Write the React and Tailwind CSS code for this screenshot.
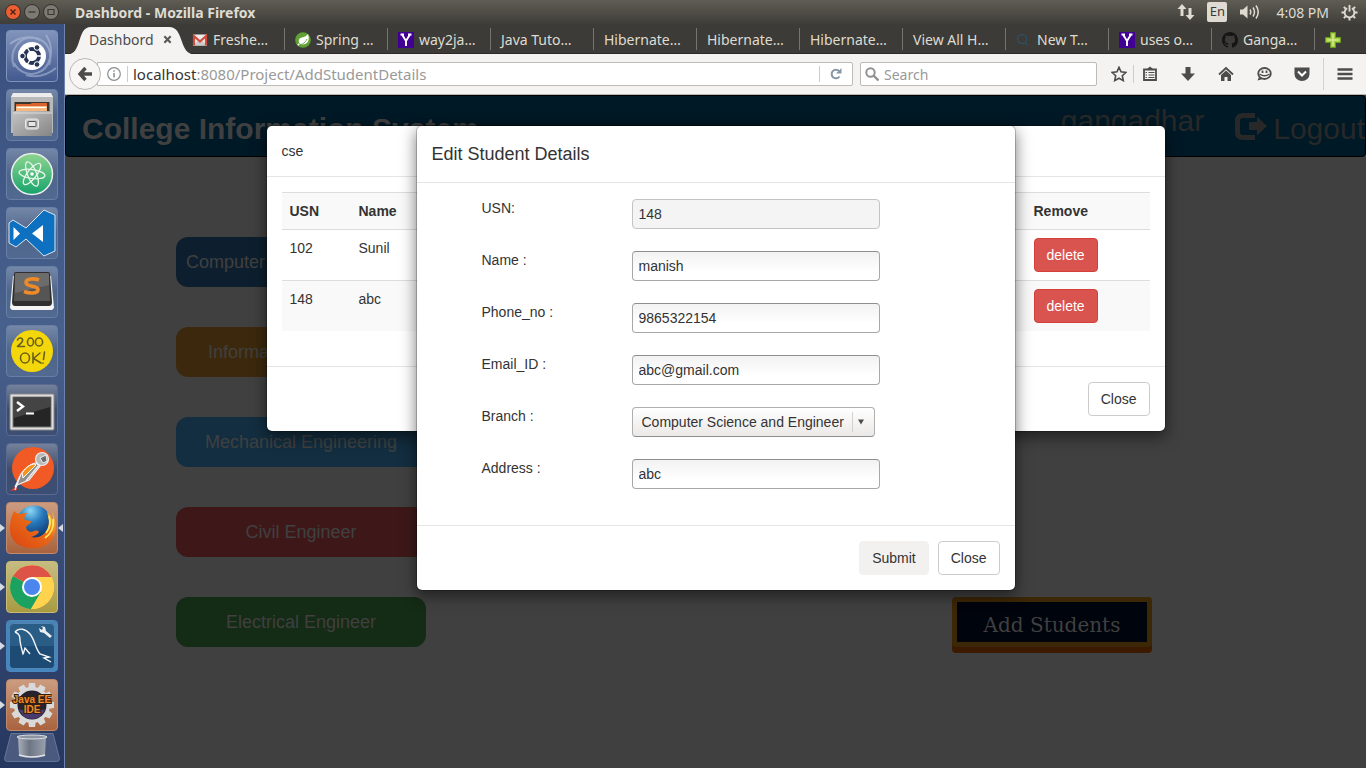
import React from "react";

const tileBase =
  "relative flex h-[52px] w-[52px] shrink-0 items-center justify-center rounded-[4px] border ";

function Art({ children }) {
  return (
    <svg viewBox="0 0 52 52" className="absolute -inset-px h-[52px] w-[52px]" aria-hidden="true">
      {children}
    </svg>
  );
}

const blue = "border-[#7f92ba] bg-linear-to-b/srgb from-[#8294bb] to-[#435a90]";
const slate = "border-[#677fa5] bg-linear-to-b/srgb from-[#7487a8] via-[#4f6589] to-[#526a91]";
const night = "border-[#5a6b8f] bg-linear-to-b/srgb from-[#74819b] via-[#3e4d6d] to-[#3c4e74]";
const rust = "border-[#c08a6c] bg-linear-to-b/srgb from-[#cc9c80] to-[#a9633e]";

const gearTeeth = Array.from({ length: 12 }, (_, i) => i * 30);

const launcherItems = [
  {
    name: "Ubuntu",
    tone: blue,
    art: (
      <Art>
        <g fill="none" stroke="#b5c1dc" strokeWidth="2" opacity=".55">
          <path d="M8 37C2 20 14 5 30 8c12 3 17 15 13 27" />
          <path d="M40 5c10 15 4 34-9 38-10 3-19-2-23-10" />
          <path d="M4 14c10-8 22-8 30-4M50 38c-10 8-20 10-30 7" />
        </g>
        <circle cx="26" cy="26" r="14" fill="#fff" />
        <circle cx="26" cy="26" r="7" fill="none" stroke="#263456" strokeWidth="4" />
        <g stroke="#fff" strokeWidth="1.4">
          <path d="M26 26H37M26 26l-5.500-10M26 26l-5.500 10" />
        </g>
        <circle cx="26" cy="26" r="5" fill="#fff" />
        <g fill="#263456" stroke="#fff" strokeWidth="1">
          <circle cx="16.500" cy="26" r="2.800" />
          <circle cx="31" cy="17.500" r="2.800" />
          <circle cx="31" cy="34.500" r="2.800" />
        </g>
      </Art>
    ),
  },
  {
    name: "Files",
    tone: slate,
    art: (
      <Art>
        <defs>
          <linearGradient id="drawer" x1="0" y1="0" x2="1" y2="1">
            <stop offset="0" stopColor="#c4c4c4" />
            <stop offset="1" stopColor="#858585" />
          </linearGradient>
        </defs>
        <path d="M7 4h38l2 4v36H5V8z" fill="#b9b9b9" />
        <path d="M7 4h38l2 4H5z" fill="#ececec" />
        <rect x="8.500" y="13" width="35" height="12" fill="#38352f" />
        <path d="M10 15h14l2-1h15v8H10z" fill="#d9642e" />
        <path d="M10 17h31v5H10z" fill="#f5b77b" />
        <path d="M11 18.500h29" stroke="#fff" strokeWidth="1.200" />
        <path d="M9 22h34l3 2v23H7V24z" fill="url(#drawer)" />
        <path d="M7 24h39" stroke="#ddd" strokeWidth="1" />
        <rect x="19.500" y="30" width="13" height="10" rx="2" fill="#c9c9c9" stroke="#e9e9e9" />
        <rect x="22" y="32.500" width="8" height="5" rx=".5" fill="#e6e6e6" stroke="#555" />
      </Art>
    ),
  },
  {
    name: "Atom",
    tone: slate,
    art: (
      <Art>
        <defs>
          <linearGradient id="atomFill" x1="0" y1="0" x2="0" y2="1">
            <stop offset="0" stopColor="#8ed58f" />
            <stop offset="1" stopColor="#17a36c" />
          </linearGradient>
        </defs>
        <circle cx="26" cy="26" r="20.500" fill="url(#atomFill)" stroke="#eee" strokeWidth="1.500" />
        <g fill="none" stroke="#e6f6ea" strokeWidth="1.300">
          <ellipse cx="26" cy="26" rx="13" ry="4.500" transform="rotate(8 26 26)" />
          <ellipse cx="26" cy="26" rx="13" ry="4.500" transform="rotate(68 26 26)" />
          <ellipse cx="26" cy="26" rx="13" ry="4.500" transform="rotate(-52 26 26)" />
        </g>
        <circle cx="26" cy="26" r="1.800" fill="#fff" />
      </Art>
    ),
  },
  {
    name: "Visual Studio Code",
    tone: slate,
    art: (
      <Art>
        <path
          d="M38 3l11 5v36l-11 5-18-17-10 8-7-4V16l4-3 13 8z"
          fill="#0e70c0"
          stroke="#dbe6f2"
          strokeWidth="1"
        />
        <path d="M7.500 20v13l6.500-6.500zM37 18v17l-11-8.500z" fill="#fff" />
      </Art>
    ),
  },
  {
    name: "Sublime Text",
    tone: slate,
    art: (
      <Art>
        <path d="M7 10h38l3 32-2 2H6l-2-2z" fill="#f4f4f4" />
        <path d="M8 8q0-2 2-2h32q2 0 2 2l2 28q0 4-3 4H9q-3 0-3-4z" fill="#2f2f2f" />
        <path d="M9 8q0-1 2-1h30q2 0 2 1l1 27H8z" fill="#555" />
        <path d="M9 8q0-1 2-1h30q2 0 2 1v11L9 27z" fill="#6c6c6c" />
        <path
          d="M33 14c-5-2-13-1.500-13 2.500 0 5 12 2.500 12 7 0 4.500-9 4-14 2"
          fill="none"
          stroke="#ee8a28"
          strokeWidth="3.600"
        />
      </Art>
    ),
  },
  {
    name: "Rest client",
    tone: slate,
    art: (
      <Art>
        <circle cx="26" cy="26" r="21" fill="#f4d70b" />
        <g fill="none" stroke="#6a5f17" strokeWidth="1.600" strokeLinecap="round" strokeLinejoin="round">
          <path d="M11.500 15c1-3 6-2.500 5 1-.6 2-3.500 4-5 5.500h7" />
          <ellipse cx="24.500" cy="17" rx="3" ry="4" />
          <ellipse cx="33" cy="17" rx="3.600" ry="4" />
          <ellipse cx="19" cy="33" rx="4.500" ry="5" />
          <path d="M27 28v10M34 28l-6.500 5.500 7.500 4.500M38.500 27l-1 7.500M37 38v.2" />
        </g>
      </Art>
    ),
  },
  {
    name: "Terminal",
    tone: night,
    art: (
      <Art>
        <rect x="4" y="10" width="44" height="36" rx="1" fill="#dedede" stroke="#888" />
        <rect x="7" y="13" width="38" height="30" fill="#252525" stroke="#777" />
        <path d="M8 14h36v9L8 34z" fill="#444" />
        <path d="M11 18l6 4.500-6 4.500" fill="none" stroke="#fff" strokeWidth="2.400" />
        <path d="M20 29.500h8" stroke="#fff" strokeWidth="2" />
      </Art>
    ),
  },
  {
    name: "Postman",
    tone: night,
    art: (
      <Art>
        <circle cx="27" cy="25" r="21" fill="#f15a24" />
        <path d="M4 48l6-5 1 4z" fill="#e8391d" />
        <path d="M9 44l6-13c4-6 11-11 15-11l4 3-11 14-12 5z" fill="#8f8f8f" stroke="#f1f1f1" strokeWidth="1.200" />
        <path d="M16 30c4-6 9-9 13-9l1 1-13 13z" fill="#f7931e" stroke="#fff" />
        <path d="M33 22L20 38M14 33l-5 14" stroke="#eee" strokeWidth="1.400" />
        <circle cx="36" cy="16" r="6.500" fill="#b8b8b8" stroke="#eee" strokeWidth="1.200" />
        <path d="M34 15l6-3 1 6-4 2z" fill="#6b6b6b" stroke="#fff" strokeWidth=".8" />
      </Art>
    ),
  },
  {
    name: "Firefox",
    tone: rust,
    running: true,
    focused: true,
    art: (
      <Art>
        <defs>
          <radialGradient id="globe" cx=".4" cy=".15" r=".8">
            <stop offset="0" stopColor="#8bd8f5" />
            <stop offset=".45" stopColor="#2678bd" />
            <stop offset="1" stopColor="#10356e" />
          </radialGradient>
          <linearGradient id="fox" x1="0" y1="1" x2="1" y2="0">
            <stop offset="0" stopColor="#d94412" />
            <stop offset=".6" stopColor="#ea6a17" />
            <stop offset="1" stopColor="#ffd23e" />
          </linearGradient>
        </defs>
        <circle cx="28" cy="21" r="17.500" fill="url(#globe)" />
        <path
          d="M8 9c2 2 4 3 6 3 3-1 5-1 8-1-4 3-4 5-3 7l6 1c1 2-4 4-5 6 0 4 5 6 8 4 3-1 4 0 5 1-2 3-5 4-8 5 8 2 15-3 17-10 2-6 0-11-1-15 4 3 6 8 6 12 1-5 0-9-2-13 5 7 6 17 3 24-4 10-13 14-22 13C12 46 4 38 4 28c0-8 1-13 4-19z"
          fill="url(#fox)"
        />
        <path d="M43 14c2 6 1 12-3 17M47 17c1 7-1 14-8 19" fill="none" stroke="#ffe75d" strokeWidth="1.800" />
      </Art>
    ),
  },
  {
    name: "Chrome",
    tone: "border-[#c9bd75] bg-linear-to-b/srgb from-[#c6bc82] to-[#a99b42]",
    running: true,
    art: (
      <Art>
        <circle cx="26" cy="26" r="22" fill="#ffd34d" />
        <path d="M26 26L7 15A22 22 0 0 1 45.500 16z" fill="#dd5347" />
        <path d="M7 15A22 22 0 0 0 25 48l10-17-9-5z" fill="#1ba260" />
        <path d="M26 16h19.500A22 22 0 0 1 25 48l10-17z" fill="#ffd34d" />
        <circle cx="26" cy="26" r="10" fill="#fff" />
        <circle cx="26" cy="26" r="8" fill="#4a86ee" />
      </Art>
    ),
  },
  {
    name: "MySQL Workbench",
    tone: "border-[#4a87bd] bg-linear-to-b/srgb from-[#4b83b3] to-[#4585c0]",
    running: true,
    art: (
      <Art>
        <rect x="3.500" y="3.500" width="45" height="45" rx="4" fill="#2a5d86" stroke="#4f86b4" />
        <path d="M4 26h44v18q0 4-4 4H8q-4 0-4-4z" fill="#1d4b73" />
        <path
          d="M9 12c4-5 11-3 15 2 5 6 5 14 10 20l9 3-5 1 7 4M9 12c5 2 5 5 5 9 1 6 2 9 3 13 1-1 1-4 2-6l5 6"
          fill="none"
          stroke="#f2f6fa"
          strokeWidth="1.400"
        />
        <path d="M35 6l4 1 1 4 6 5-2 2-6-5-4-1-1-4 3 2 1-2z" fill="#e9eef3" />
      </Art>
    ),
  },
  {
    name: "Java EE IDE",
    tone: rust,
    running: true,
    art: (
      <Art>
        <g fill="#d9d9d9">
          {gearTeeth.map((a) => (
            <path key={a} d="M23 4h6l1 7h-8z" transform={`rotate(${a} 26 26)`} />
          ))}
        </g>
        <circle cx="26" cy="26" r="18" fill="#d9d9d9" />
        <circle cx="26" cy="26" r="14.500" fill="#28222f" />
        <path d="M13 30c8 3 18 3 26 0-2 6-7 10-13 10s-11-4-13-10z" fill="#493a70" />
        <g
          fill="#f08a2c"
          stroke="#33200c"
          strokeWidth="2"
          paintOrder="stroke"
          fontFamily="Liberation Sans, sans-serif"
          fontWeight="bold"
          fontSize="10"
          textAnchor="middle"
        >
          <text x="26" y="24">Java EE</text>
          <text x="26" y="34">IDE</text>
        </g>
      </Art>
    ),
  },
];

function Launcher() {
  return (
    <nav
      aria-label="Launcher"
      className="flex w-[65px] shrink-0 flex-col items-center gap-[7px] border-r border-[#6b83ad] bg-linear-to-b/srgb from-[#3a5180] via-[#48608c] via-42% to-[#26375f] pt-[6px] pr-px"
    >
      {launcherItems.map((item) => (
        <div key={item.name} className="relative flex w-full justify-center">
          {item.running && (
            <svg viewBox="0 0 5 8" className="absolute top-[22px] left-0 h-2 w-[5px]" aria-hidden="true">
              <path d="M0 0l5 4-5 4z" fill="#d5dae3" />
            </svg>
          )}
          <button type="button" aria-label={item.name} className={tileBase + item.tone}>
            {item.art}
          </button>
          {item.focused && (
            <svg viewBox="0 0 5 8" className="absolute top-[22px] right-0 h-2 w-[5px]" aria-hidden="true">
              <path d="M5 0L0 4l5 4z" fill="#d5dae3" />
            </svg>
          )}
        </div>
      ))}
      <button type="button" aria-label="Trash" className="-mt-[5px]">
        <svg viewBox="0 0 56 29" className="h-[29px] w-[56px]" aria-hidden="true">
          <defs>
            <linearGradient id="bin" x1="0" y1="0" x2="1" y2="0">
              <stop offset="0" stopColor="#a9b0ba" />
              <stop offset=".4" stopColor="#6d7585" />
              <stop offset="1" stopColor="#99a1ad" />
            </linearGradient>
          </defs>
          <path d="M7 .5h42l6.500 25q0 3-3 3h-49q-3 0-3-3z" fill="#4a5a7e" stroke="#64759a" />
          <path d="M14 3h28l-1 20q-13 4-26 0z" fill="url(#bin)" />
          <path d="M15 22q13 4 26 0" stroke="#dfe3e8" strokeWidth="1.500" fill="none" />
          <ellipse cx="28" cy="4" rx="15" ry="2" fill="#8d95a2" stroke="#dde1e6" />
        </svg>
      </button>
    </nav>
  );
}

function SystemBar() {
  return (
    <header className="flex h-6 shrink-0 items-center bg-linear-to-b/srgb from-[#5f5d53] to-[#3e3d39] pl-[5px] font-['Noto_Sans',sans-serif] text-[14px] text-[#dfdbd2]">
      <div className="flex gap-[3px]">
        <button type="button" aria-label="Close window" className="h-4 w-4">
          <svg viewBox="0 0 16 16"><circle cx="8" cy="8" r="7.500" fill="#ed5f33" stroke="#34312c" /><path d="M5.500 5.500l5 5m0-5l-5 5" stroke="#4a2313" strokeWidth="1.400" /></svg>
        </button>
        <button type="button" aria-label="Minimise" className="h-4 w-4">
          <svg viewBox="0 0 16 16"><circle cx="8" cy="8" r="7.500" fill="#7c7a72" stroke="#34312c" /><path d="M4.500 8h7" stroke="#3b3934" strokeWidth="1.300" /></svg>
        </button>
        <button type="button" aria-label="Maximise" className="h-4 w-4">
          <svg viewBox="0 0 16 16"><circle cx="8" cy="8" r="7.500" fill="#7c7a72" stroke="#34312c" /><path d="M5 5.500h6v5H5z" fill="none" stroke="#3b3934" strokeWidth="1.200" /></svg>
        </button>
      </div>
      <span className="ml-4 font-bold">Dashbord - Mozilla Firefox</span>
      <div className="ml-auto flex items-center pr-2">
        <svg viewBox="0 0 18 18" className="mr-3 h-[18px] w-[18px]" aria-hidden="true">
          <path d="M5 1l4.500 5h-3v7h-3V6h-3zM13 17l4.500-5h-3V5h-3v7h-3z" fill="#dfdbd2" />
        </svg>
        <span className="mr-3 flex h-5 w-5 items-center justify-center rounded-[2px] bg-[#dfdbd2] text-[13px] text-[#3c3b37]">En</span>
        <svg viewBox="0 0 21 18" className="mr-4 h-[18px] w-[21px]" aria-hidden="true">
          <path d="M1 6.500h3l4.500-4v13l-4.500-4H1z" fill="#dfdbd2" />
          <path d="M11 6.500q1.500 2.500 0 5M14 4.500q3 4.500 0 9M17 2.500q4.500 6.500 0 13" fill="none" stroke="#dfdbd2" strokeWidth="1.500" />
        </svg>
        <span className="mr-3">4:08 PM</span>
        <svg viewBox="0 0 18 18" className="h-[17px] w-[17px]" aria-hidden="true">
          <g stroke="#dfdbd2" fill="none" strokeWidth="2">
            <path d="M6.500 4.500a5.200 5.200 0 1 0 5 0" />
            <path d="M9 1v7" />
            <path d="M9 14.500v3M.5 9h3M14.500 9h3M3 15l2-2M15 15l-2-2M3 3l2 2M15 3l-2 2" />
          </g>
        </svg>
      </div>
    </header>
  );
}

const gmail = (
  <svg viewBox="0 0 16 16" className="h-4 w-4 shrink-0" aria-hidden="true">
    <rect x="1" y="2.500" width="14" height="11" fill="#eee" />
    <path d="M1 13.500l6-6h2l6 6z" fill="#ccc" />
    <path d="M2 13.500V4l6 5.500L14 4v9.500" fill="none" stroke="#d54b3d" strokeWidth="2.200" />
  </svg>
);
const spring = (
  <svg viewBox="0 0 16 16" className="h-4 w-4 shrink-0" aria-hidden="true">
    <circle cx="8" cy="8" r="7.800" fill="#5fa134" />
    <path d="M13 2c2 6 0 10-5 10.500-3 0-5-2-4-5C5.500 4.500 10 6 13 2z" fill="#fff" />
    <path d="M3 13c4 0 7-2 9-6" stroke="#5fa134" fill="none" strokeWidth=".9" />
    <circle cx="3.500" cy="12.500" r="1" fill="#fff" />
  </svg>
);
const yahoo = (
  <svg viewBox="0 0 16 16" className="h-4 w-4 shrink-0" aria-hidden="true">
    <path d="M0 0h16v16H0z" fill="#410093" />
    <path d="M4 2.500l4 6.500 4-6.500M8 9v5M2.500 2.500h3.500M10 2.500h3.500" fill="none" stroke="#fff" strokeWidth="1.900" />
  </svg>
);
const lens = (
  <svg viewBox="0 0 16 16" className="h-4 w-4 shrink-0" aria-hidden="true">
    <circle cx="6" cy="7" r="4.500" fill="none" stroke="#2f4d64" strokeWidth="1.300" />
    <path d="M9 10.500l2.500 2.500" stroke="#2f4d64" strokeWidth="1.500" />
  </svg>
);
const github = (
  <svg viewBox="0 0 16 16" className="h-4 w-4 shrink-0" aria-hidden="true">
    <path fill="#161514" d="M8 0C3.580 0 0 3.580 0 8c0 3.540 2.290 6.530 5.470 7.590.4.070.55-.17.55-.38 0-.19-.01-.82-.01-1.490-2.010.37-2.530-.49-2.690-.94-.09-.23-.48-.94-.82-1.130-.28-.15-.68-.52-.01-.53.63-.01 1.080.58 1.230.82.72 1.210 1.870.87 2.330.66.07-.52.28-.87.51-1.070-1.780-.2-3.640-.89-3.640-3.950 0-.87.31-1.590.82-2.150-.08-.2-.36-1.020.08-2.120 0 0 .67-.21 2.200.82.64-.18 1.320-.27 2-.27s1.360.09 2 .27c1.530-1.040 2.200-.82 2.200-.82.44 1.100.16 1.920.08 2.120.51.56.82 1.270.82 2.150 0 3.070-1.870 3.750-3.650 3.950.29.25.54.73.54 1.480 0 1.070-.01 1.930-.01 2.200 0 .21.15.46.55.38A8.010 8.010 0 0 0 16 8c0-4.420-3.580-8-8-8z" />
  </svg>
);

const tabs = [
  { text: "Freshe…", icon: gmail },
  { text: "Spring …", icon: spring },
  { text: "way2ja…", icon: yahoo },
  { text: "Java Tuto…" },
  { text: "Hibernate…" },
  { text: "Hibernate…" },
  { text: "Hibernate…" },
  { text: "View All H…" },
  { text: "New T…", icon: lens },
  { text: "uses o…", icon: yahoo },
  { text: "Ganga…", icon: github },
];

function TabStrip() {
  return (
    <div role="tablist" className="flex h-[30px] shrink-0 items-center border-b border-[#2b2a27] bg-[#3c3b37] font-['Noto_Sans',sans-serif] text-[14px] text-[#dfdbd2]">
      <div className="relative flex h-[22px] w-[117px] shrink-0 items-center gap-[9px] pt-[2px] pl-6">
        <svg viewBox="0 0 130 29" className="absolute -top-[2px] left-0 h-[29px] w-[130px]" aria-hidden="true">
          <path d="M2 28.500C18 28.500 11 1 26 1h78c16 0 9 27.500 26 27.500z" fill="#f4f3f1" />
        </svg>
        <button type="button" role="tab" aria-selected="true" className="relative text-[#4c4c4c]">Dashbord</button>
        <button type="button" aria-label="Close tab" className="relative">
          <svg viewBox="0 0 10 10" className="h-[9px] w-[9px]"><path d="M1.500 1.500l7 7m0-7l-7 7" stroke="#5a5a5a" strokeWidth="2.400" /></svg>
        </button>
      </div>
      {tabs.map((t, i) => (
        <button
          key={i}
          type="button"
          role="tab"
          aria-selected="false"
          className="flex h-[22px] w-[103px] min-w-0 items-center gap-[5px] overflow-hidden border-r border-[#76746e] pt-[2px] pl-[10px] whitespace-nowrap"
        >
          {t.icon}
          {t.text}
        </button>
      ))}
      <button type="button" aria-label="New tab" className="ml-[10px] pt-[2px]">
        <svg viewBox="0 0 16 16" className="h-4 w-4">
          <path d="M5.500 .5h5v5h5v5h-5v5h-5v-5h-5v-5h5z" fill="#a5cf42" stroke="#6a9a1f" />
          <path d="M8 2v12M2 8h12" stroke="#d3e98e" strokeWidth="1.500" />
        </svg>
      </button>
    </div>
  );
}

function ToolIcon({ label, children, className }) {
  return (
    <button type="button" aria-label={label} className={"flex shrink-0 items-center justify-center " + className}>
      <svg viewBox="0 0 16 16" className="h-4 w-4">{children}</svg>
    </button>
  );
}

function Toolbar() {
  return (
    <div className="flex h-[41px] shrink-0 items-center border-b border-[#b8b6b2] bg-[#f4f3f1] pl-1 font-['Noto_Sans',sans-serif] text-[14px]">
      <button type="button" aria-label="Back" className="relative z-10 flex h-8 w-8 shrink-0 items-center justify-center rounded-full border border-[#b9b7b3] bg-[#f7f6f5]">
        <svg viewBox="0 0 16 16" className="h-4 w-4"><path d="M8.500 2L3 8l5.500 6M3.500 8H15" fill="none" stroke="#4c4c4c" strokeWidth="3.400" /></svg>
      </button>
      <div className="-ml-1 flex h-6 grow items-center rounded-r-[2px] border border-[#bdbbb7] bg-white pl-[9px]">
        <svg viewBox="0 0 14 14" className="h-[14px] w-[14px] shrink-0" aria-hidden="true">
          <circle cx="7" cy="7" r="6.300" fill="none" stroke="#8c8c8c" strokeWidth="1.200" />
          <path d="M7 6v4.500M7 3.200v1.600" stroke="#8c8c8c" strokeWidth="1.500" />
        </svg>
        <span className="mr-[5px] ml-[6px] h-4 w-px bg-[#ccc]" />
        <a href="#" className="grow text-[15px] leading-5 whitespace-nowrap text-[#999]"><span className="text-[#333]">localhost</span>:8080/Project/AddStudentDetails</a>
        <span className="h-4 w-px bg-[#ccc]" />
        <button type="button" aria-label="Reload" className="px-[9px]">
          <svg viewBox="0 0 14 14" className="h-[14px] w-[14px]"><path d="M10.500 9.500A4.300 4.300 0 1 1 10 4" fill="none" stroke="#8797a6" strokeWidth="2" /><path d="M12.500 1v5.500H7z" fill="#8797a6" /></svg>
        </button>
      </div>
      <label className="mr-[10px] ml-[7px] flex h-6 w-[237px] shrink-0 items-center gap-[5px] rounded-[2px] border border-[#bdbbb7] bg-white px-1">
        <svg viewBox="0 0 14 14" className="h-[14px] w-[14px] shrink-0" aria-hidden="true"><circle cx="5.500" cy="5.500" r="4.200" fill="none" stroke="#919191" strokeWidth="2" /><path d="M8.500 8.500l5 5" stroke="#919191" strokeWidth="2.400" /></svg>
        <input aria-label="Search" placeholder="Search" className="w-full min-w-0 bg-transparent outline-none placeholder:text-[#999]" />
      </label>
      <ToolIcon label="Bookmark this page" className="w-6">
        <path d="M8 1.300l2 4.500 5 .6-3.700 3.300 1 4.900L8 12.200l-4.300 2.400 1-4.900L1 6.400l5-.6z" fill="none" stroke="#4c4c4c" strokeWidth="1.600" />
      </ToolIcon>
      <span className="ml-[2px] h-[18px] w-px bg-[#ccc]" />
      <ToolIcon label="Bookmarks" className="w-8">
        <path d="M2 3.500h12v10.500H2z" fill="none" stroke="#4c4c4c" strokeWidth="1.800" />
        <path d="M5 3l3-2.500L11 3z" fill="#4c4c4c" />
        <path d="M3.500 6.500h1.500m1.500 0h6M3.500 9h1.500m1.500 0h6M3.500 11.500h1.500m1.500 0h6" stroke="#4c4c4c" strokeWidth="1" />
      </ToolIcon>
      <div className="flex">
        <ToolIcon label="Downloads" className="w-11"><path d="M5.500 1h5v6.500H15l-7 7.500-7-7.500h4.500z" fill="#4c4c4c" /></ToolIcon>
        <ToolIcon label="Home" className="w-8"><path d="M1 8.500L8 2l7 6.500" fill="none" stroke="#4c4c4c" strokeWidth="1.800" /><path d="M3 9l5-4.500L13 9v6H9.500v-4h-3v4H3z" fill="#4c4c4c" /></ToolIcon>
        <ToolIcon label="Chat" className="w-11">
          <ellipse cx="8.500" cy="7.500" rx="6.300" ry="5.500" fill="none" stroke="#4c4c4c" strokeWidth="1.800" />
          <path d="M3 11l-1.500 3.500L7 13z" fill="#4c4c4c" />
          <path d="M6.500 4.500v2.500M10.500 4.500v2.500" stroke="#4c4c4c" strokeWidth="1.800" />
          <path d="M3.500 8q5 3.500 10 0" fill="none" stroke="#4c4c4c" strokeWidth="1.400" />
        </ToolIcon>
        <ToolIcon label="Pocket" className="w-8"><path d="M.5 1.500h15v6.500a7.500 7 0 0 1-15 0z" fill="#4c4c4c" /><path d="M4 5.500l4 4 4-4" fill="none" stroke="#fff" strokeWidth="2" /></ToolIcon>
      </div>
      <span className="ml-[5px] h-8 w-px bg-[#d3d1ce]" />
      <ToolIcon label="Menu" className="w-[42px]"><path d="M.5 3.500h15M.5 8h15M.5 12.500h15" stroke="#4c4c4c" strokeWidth="2.600" /></ToolIcon>
    </div>
  );
}

const departments = [
  { name: "Computer", tone: "bg-[#0d1f2e] text-left" },
  { name: "Information Technology", tone: "bg-[#3c290d]" },
  { name: "Mechanical Engineering", tone: "bg-[#132e40]" },
  { name: "Civil Engineer", tone: "bg-[#3e1819]" },
  { name: "Electrical Engineer", tone: "bg-[#142b16]" },
];

function Dashboard() {
  return (
    <div className="flex grow flex-col">
      <nav className="flex h-[62px] shrink-0 rounded-[4px] border border-black bg-[#001926] pl-4 text-[30px] leading-[34px]">
        <h1 className="pt-4 font-bold text-[#404040]">College Information System</h1>
        <div className="ml-auto flex text-[#282828]">
          <span className="mr-[31px] pt-2">gangadhar</span>
          <a href="#" className="flex items-start pt-4">
            <svg viewBox="0 0 32 28" className="mr-[6px] h-7 w-8" aria-hidden="true">
              <path d="M20 3.500H8Q2.500 3.500 2.500 9v11q0 5.500 5.500 5.500h12" fill="none" stroke="#282828" strokeWidth="5" />
              <path d="M15 10h7V4.500l10 9.500-10 9.500V18h-7q-1 0-1-1v-6q0-1 1-1z" fill="#282828" />
            </svg>
            Logout
          </a>
        </div>
      </nav>
      <main className="flex items-end justify-between pt-20 pr-[214px] pb-[115px] pl-[111px]">
        <div className="flex flex-col gap-10">
          {departments.map((d) => (
            <button
              key={d.name}
              type="button"
              className={"h-[50px] w-[250px] rounded-[12px] px-[10px] text-[18px] whitespace-nowrap text-[#404040] " + d.tone}
            >
              {d.name}
            </button>
          ))}
        </div>
        <button
          type="button"
          className="h-[50px] w-[200px] rounded-[4px] border-[5px] border-[#3c2706] bg-[#00040c] pt-[6px] font-['DejaVu_Serif',serif] text-[20px] text-[#404040] shadow-[0_6px_0_#3b1a00]"
        >
          Add Students
        </button>
      </main>
    </div>
  );
}

function Modal({ label, width, header, footer, children }) {
  return (
    <div className="pointer-events-none absolute inset-0 flex items-start justify-center pt-[30px]">
      <section
        role="dialog"
        aria-label={label}
        className={
          "pointer-events-auto rounded-[6px] border border-black/20 bg-white bg-clip-padding text-[14px] leading-5 text-[#333] shadow-[0_5px_15px_rgba(0,0,0,0.5)] " +
          width
        }
      >
        <div className="border-b border-[#e5e5e5] p-[15px]">{header}</div>
        <div className="p-[15px]">{children}</div>
        <div className="flex justify-end gap-[9px] border-t border-[#e5e5e5] p-[15px]">{footer}</div>
      </section>
    </div>
  );
}

const closeButton = (
  <button type="button" className="rounded-[4px] border border-[#ccc] bg-white px-3 py-[6px]">Close</button>
);

function StudentsModal() {
  const cell = "border-t border-[#ddd] p-2 text-left align-top";
  return (
    <Modal label="cse" width="w-[900px]" header={<p>cse</p>} footer={closeButton}>
      <table className="mb-5 w-full table-fixed border-separate border-spacing-0">
        <colgroup>
          <col className="w-[69px]" />
          <col className="w-[120px]" />
          <col />
          <col className="w-[124px]" />
        </colgroup>
        <thead>
          <tr className="bg-[#f9f9f9]">
            <th className={cell}>USN</th>
            <th className={cell}>Name</th>
            <td className={cell} />
            <th className={cell}>Remove</th>
          </tr>
        </thead>
        <tbody>
          {[["102", "Sunil"], ["148", "abc"]].map(([usn, name]) => (
            <tr key={usn} className="even:bg-[#f9f9f9]">
              <td className={cell}>{usn}</td>
              <td className={cell}>{name}</td>
              <td className={cell} />
              <td className={cell}>
                <button type="button" className="block rounded-[4px] border border-[#d43f3a] bg-[#d9534f] px-3 py-[6px] text-white">delete</button>
              </td>
            </tr>
          ))}
        </tbody>
      </table>
    </Modal>
  );
}

function Field({ id, label, children }) {
  return (
    <div className="grid h-[52px] grid-cols-[150px_1fr] items-start">
      <label htmlFor={id}>{label}</label>
      <div className="pt-px">{children}</div>
    </div>
  );
}

const inputBase = "block h-[30px] w-[248px] rounded-[4px] border px-[6px] outline-none ";
const inputLive =
  inputBase + "border-[#a8a8a8] border-t-[#8e8e8e] bg-linear-to-b/srgb from-[#f2f2f2] to-white to-70%";

function EditModal() {
  return (
    <Modal
      label="Edit Student Details"
      width="w-[600px]"
      header={<h2 className="text-[18px] leading-[26px]">Edit Student Details</h2>}
      footer={
        <>
          <button type="button" className="rounded-[4px] border border-[#f2f1f0] bg-[#f2f1f0] px-3 py-[6px]">Submit</button>
          {closeButton}
        </>
      }
    >
      <form className="pl-[50px]">
        <Field id="usn" label="USN:">
          <input id="usn" readOnly defaultValue="148" className={inputBase + "border-[#c3c3c3] bg-[#f4f4f4]"} />
        </Field>
        <Field id="name" label="Name :">
          <input id="name" defaultValue="manish" className={inputLive} />
        </Field>
        <Field id="phone" label="Phone_no :">
          <input id="phone" defaultValue="9865322154" className={inputLive} />
        </Field>
        <Field id="email" label="Email_ID :">
          <input id="email" defaultValue="abc@gmail.com" className={inputLive} />
        </Field>
        <Field id="branch" label="Branch :">
          <div className="relative w-[243px]">
            <select
              id="branch"
              className="block h-[30px] w-full appearance-none rounded-[4px] border border-[#b0b0b0] border-b-[#8e8e8e] bg-linear-to-b/srgb from-white to-[#ebe9e7] pr-6 pl-[9px]"
            >
              <option>Computer Science and Engineer</option>
            </select>
            <span className="pointer-events-none absolute top-[5px] right-[22px] h-5 w-px bg-[#d3d1cf]" />
            <svg viewBox="0 0 6 6" className="pointer-events-none absolute top-3 right-[11px] h-[6px] w-[6px]" aria-hidden="true">
              <path d="M0 .5h6L3 5.500z" fill="#4c4c4c" />
            </svg>
          </div>
        </Field>
        <Field id="address" label="Address :">
          <input id="address" defaultValue="abc" className={inputLive} />
        </Field>
      </form>
    </Modal>
  );
}

export default function App() {
  return (
    <div className="flex min-h-screen flex-col font-['Liberation_Sans',Arial,sans-serif]">
      <SystemBar />
      <div className="flex grow">
        <Launcher />
        <div className="flex min-w-0 grow flex-col">
          <TabStrip />
          <Toolbar />
          <div className="relative flex grow flex-col bg-[#404040]">
            <Dashboard />
            <StudentsModal />
            <EditModal />
          </div>
        </div>
      </div>
    </div>
  );
}
